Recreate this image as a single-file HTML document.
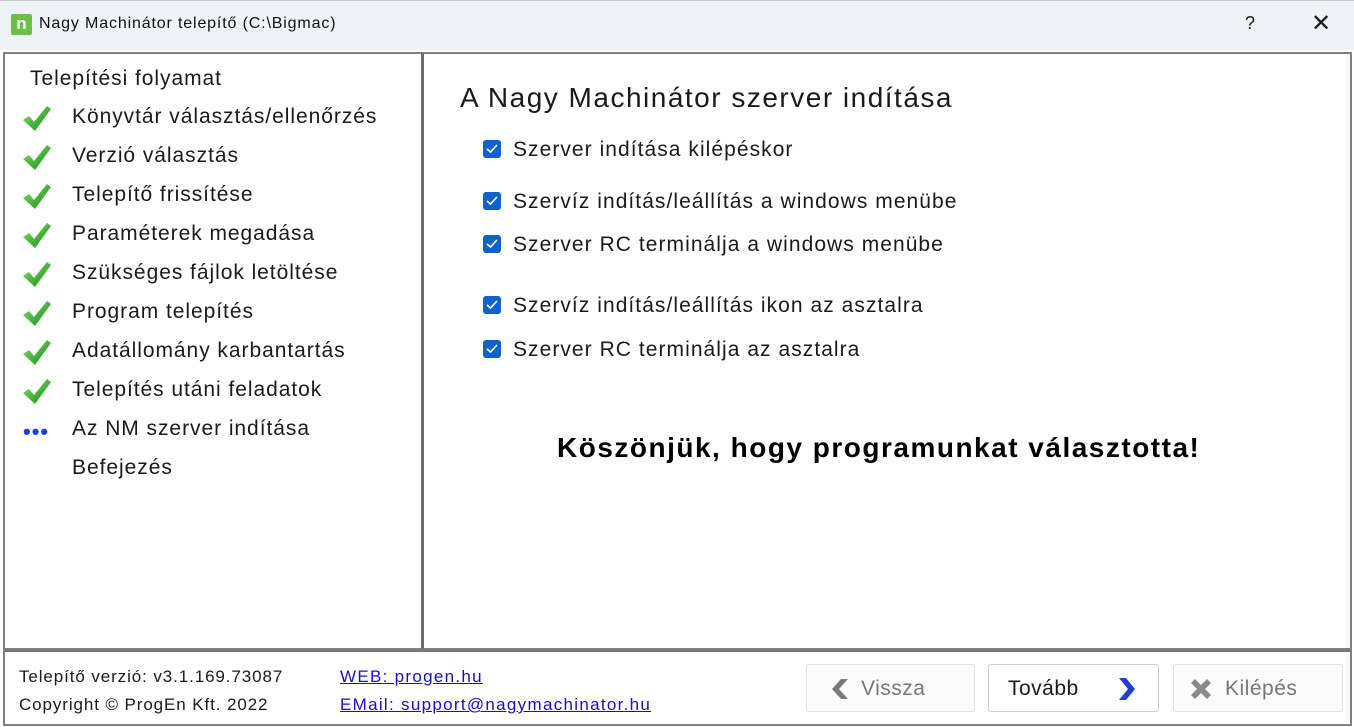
<!DOCTYPE html>
<html><head><meta charset="utf-8"><style>
*{margin:0;padding:0;box-sizing:border-box}
body{width:1354px;height:727px;background:#fff;font-family:"Liberation Sans",sans-serif;color:#1a1a1a;position:relative;overflow:hidden}
.tb{position:absolute;left:0;top:0;width:1354px;height:50px;background:#eef3f9;border-top:1px solid #ccc}
.tb .t{position:absolute;left:39px;top:14px;font-size:16px;color:#111;letter-spacing:0.85px}
.logo{position:absolute;left:11px;top:13px;width:21px;height:21px;background:#6cbf45;border-radius:2px;color:#fff;font-weight:bold;font-size:17px;line-height:19px;text-align:center}
.q{position:absolute;left:1245px;top:12px;font-size:18px}
.x{position:absolute;left:1311px;top:8px;font-size:24px;font-weight:300}
.lp{position:absolute;left:3px;top:52px;width:420px;height:598px;border:2px solid #808080;border-right:none;background:#fff}
.rp{position:absolute;left:421px;top:52px;width:931px;height:598px;border:2px solid #808080;border-left:3px solid #6b6b6b;background:#fff}
.bot{position:absolute;left:3px;top:650px;width:1349px;height:76px;border:2px solid #808080;border-top:2px solid #777;background:#fff}
.item{position:absolute;left:72px;font-size:21px;color:#1a1a1a;letter-spacing:0.95px;white-space:nowrap}
.chk{position:absolute;left:22px}
h1{position:absolute;left:460px;top:82px;font-size:28px;font-weight:normal;color:#1a1a1a;letter-spacing:1.5px;white-space:nowrap}
.cb{position:absolute;left:483px;width:18px;height:18px;background:#0f62c9;border-radius:3px}
.cb svg{position:absolute;left:3px;top:4px}
.cl{position:absolute;left:513px;font-size:21px;letter-spacing:1.05px;white-space:nowrap}
.thanks{position:absolute;left:557px;top:432px;font-size:28px;font-weight:bold;color:#000;letter-spacing:1.5px;white-space:nowrap}
.ft{position:absolute;font-size:17px;letter-spacing:0.9px;white-space:nowrap}
a{color:#1a0dcc;text-decoration:underline}
.lk{letter-spacing:1.3px}
.btn{position:absolute;top:664px;height:48px;border:1px solid #e2e2e2;border-radius:3px;background:#fbfbfb;font-size:21px;color:#777;letter-spacing:0.5px}
</style></head><body>
<div class="tb"><div class="logo">n</div><div class="t">Nagy Machinátor telepítő (C:\Bigmac)</div><div class="q">?</div><div class="x">✕</div></div>
<div class="lp"></div>
<div class="rp"></div>
<div class="bot"></div>
<div class="item" style="left:30px;top:67px">Telepítési folyamat</div>
<div id="items"></div>
<svg width="0" height="0" style="position:absolute"><defs><linearGradient id="g" x1="0" y1="0" x2="1" y2="1"><stop offset="0" stop-color="#8de26a"/><stop offset="1" stop-color="#0b8a13"/></linearGradient></defs></svg>
<script>
var t=["Könyvtár választás/ellenőrzés","Verzió választás","Telepítő frissítése","Paraméterek megadása","Szükséges fájlok letöltése","Program telepítés","Adatállomány karbantartás","Telepítés utáni feladatok","Az NM szerver indítása","Befejezés"];
var h="";
for(var i=0;i<t.length;i++){var y=105+i*39;h+='<div class="item" style="top:'+y+'px">'+t[i]+'</div>';
if(i<8)h+='<svg class="chk" style="top:'+(y-2)+'px" width="30" height="30" viewBox="0 0 30 30"><path d="M1 17 L7 13 L12 19 L25 3 L29 6 L13 28 Z" fill="url(#g)"/></svg>';
if(i==8)h+='<div style="position:absolute;left:23px;top:'+(y+2)+'px;color:#1f3fd6;font-size:22px;font-weight:bold;letter-spacing:1px">•••</div>';}
document.getElementById("items").innerHTML=h;
</script>
<h1>A Nagy Machinátor szerver indítása</h1>
<div class="cb" style="top:140px"><svg width="12" height="10"><path d="M1 5 L4.5 8 L11 1" stroke="#fff" stroke-width="1.6" fill="none"/></svg></div><div class="cl" style="top:138px">Szerver indítása kilépéskor</div>
<div class="cb" style="top:192px"><svg width="12" height="10"><path d="M1 5 L4.5 8 L11 1" stroke="#fff" stroke-width="1.6" fill="none"/></svg></div><div class="cl" style="top:190px">Szervíz indítás/leállítás a windows menübe</div>
<div class="cb" style="top:235px"><svg width="12" height="10"><path d="M1 5 L4.5 8 L11 1" stroke="#fff" stroke-width="1.6" fill="none"/></svg></div><div class="cl" style="top:233px">Szerver RC terminálja a windows menübe</div>
<div class="cb" style="top:296px"><svg width="12" height="10"><path d="M1 5 L4.5 8 L11 1" stroke="#fff" stroke-width="1.6" fill="none"/></svg></div><div class="cl" style="top:294px">Szervíz indítás/leállítás ikon az asztalra</div>
<div class="cb" style="top:340px"><svg width="12" height="10"><path d="M1 5 L4.5 8 L11 1" stroke="#fff" stroke-width="1.6" fill="none"/></svg></div><div class="cl" style="top:338px">Szerver RC terminálja az asztalra</div>
<div class="thanks">Köszönjük, hogy programunkat választotta!</div>
<div class="ft" style="left:19px;top:667px">Telepítő verzió: v3.1.169.73087</div>
<div class="ft" style="left:19px;top:695px">Copyright © ProgEn Kft. 2022</div>
<div class="ft lk" style="left:340px;top:667px"><a>WEB: progen.hu</a></div>
<div class="ft lk" style="left:340px;top:695px"><a>EMail: support@nagymachinator.hu</a></div>
<div class="btn" style="left:806px;width:169px"><svg style="position:absolute;left:22px;top:13px" width="20" height="22"><path d="M12 1 L19 1 L10 11 L19 21 L12 21 L3 11 Z" fill="#7a7a7a"/></svg><span style="position:absolute;left:54px;top:12px">Vissza</span></div>
<div class="btn" style="left:988px;width:171px;background:#fff;border-color:#ccc;color:#1a1a1a"><span style="position:absolute;left:19px;top:12px">Tovább</span><svg style="position:absolute;left:128px;top:12px" width="20" height="24"><path d="M2 1 L9 1 L18 12 L9 23 L2 23 L11 12 Z" fill="#1f3fd6"/></svg></div>
<div class="btn" style="left:1173px;width:170px"><svg style="position:absolute;left:14px;top:11px" width="26" height="26"><path d="M3 7 L7 3 L13 9 L19 3 L23 7 L17 13 L23 19 L19 23 L13 17 L7 23 L3 19 L9 13 Z" fill="#8a8a8a"/></svg><span style="position:absolute;left:51px;top:12px">Kilépés</span></div>
</body></html>
